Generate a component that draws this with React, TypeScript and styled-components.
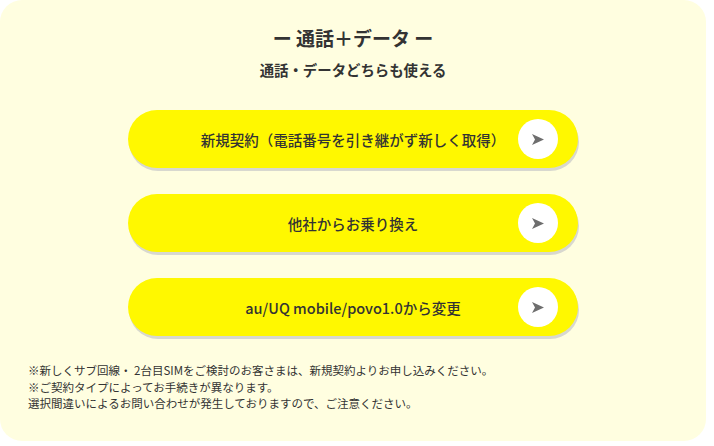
import React from "react";
import styled, { createGlobalStyle } from "styled-components";

const Global = createGlobalStyle`
  html, body { margin: 0; padding: 0; background: #ffffff; }
  body { font-family: "Noto Sans CJK JP", "Noto Sans", sans-serif; color: #333333; }
`;

const Card = styled.section`
  box-sizing: border-box;
  width: 706px;
  height: 441px;
  background: #fffee0;
  border-radius: 22px;
  padding: 25px 28px 0 28px;
  display: flex;
  flex-direction: column;
`;

const Title = styled.h2`
  margin: 0;
  font-size: 19px;
  line-height: 26px;
  font-weight: 700;
  text-align: center;
  color: #333333;
`;

const Subtitle = styled.p`
  margin: 9px 0 0 0;
  font-size: 14.4px;
  line-height: 20px;
  font-weight: 700;
  text-align: center;
  color: #333333;
`;

const ButtonList = styled.div`
  margin-top: 30px;
  display: flex;
  flex-direction: column;
  align-items: center;
  gap: 26px;
`;

const PillButton = styled.a`
  box-sizing: border-box;
  width: 450px;
  height: 58px;
  border-radius: 29px;
  background: #fff800;
  box-shadow: 1px 3px 0 #d8d8cf;
  display: grid;
  grid-template-columns: 60px 1fr 60px;
  align-items: center;
  text-decoration: none;
  cursor: pointer;
`;

const Label = styled.span`
  grid-column: 2;
  text-align: center;
  font-size: 14.5px;
  font-weight: 500;
  color: #333333;
  white-space: nowrap;
`;

const Circle = styled.span`
  grid-column: 3;
  width: 40px;
  height: 40px;
  border-radius: 50%;
  background: #ffffff;
  display: flex;
  align-items: center;
  justify-content: center;
`;

const Notes = styled.div`
  margin-top: 26px;
  font-size: 11.5px;
  line-height: 16.5px;
  color: #333333;
`;

const NoteLine = styled.p`
  margin: 0;
  white-space: nowrap;
`;

const Arrow = () => (
  <svg width="12" height="11" viewBox="0 0 12 11" aria-hidden="true">
    <polygon points="0,0 12,5.5 0,11 3,5.5" fill="#6e6e6e" />
  </svg>
);

const buttons = [
  "新規契約（電話番号を引き継がず新しく取得）",
  "他社からお乗り換え",
  "au/UQ mobile/povo1.0から変更",
];

export default function App() {
  return (
    <>
      <Global />
      <Card>
        <Title>ー 通話＋データ ー</Title>
        <Subtitle>通話・データどちらも使える</Subtitle>
        <ButtonList>
          {buttons.map((b) => (
            <PillButton key={b}>
              <Label>{b}</Label>
              <Circle>
                <Arrow />
              </Circle>
            </PillButton>
          ))}
        </ButtonList>
        <Notes>
          <NoteLine>※新しくサブ回線・ 2台目SIMをご検討のお客さまは、新規契約よりお申し込みください。</NoteLine>
          <NoteLine>※ご契約タイプによってお手続きが異なります。</NoteLine>
          <NoteLine>選択間違いによるお問い合わせが発生しておりますので、ご注意ください。</NoteLine>
        </Notes>
      </Card>
    </>
  );
}
